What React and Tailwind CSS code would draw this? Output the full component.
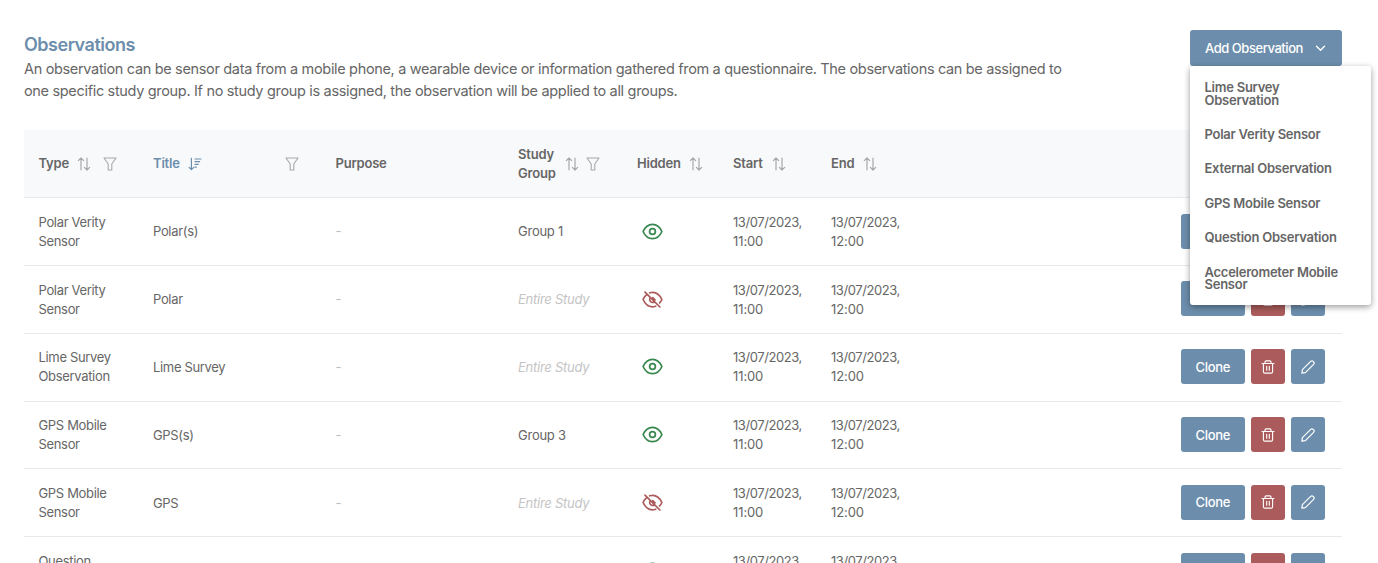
const line = { fill: 'none', stroke: 'currentColor', strokeLinecap: 'round', strokeLinejoin: 'round' };

function SortIcon() {
  return (
    <svg className="h-[14px] w-[14px] shrink-0 text-[#a6a8ab]" viewBox="0 0 14 14" {...line} strokeWidth="1.2">
      <path d="M4 12.8V1M1.3 3.7L4 1l2.7 2.7M10 1.2V13M7.4 10.4L10 13l2.7-2.6" />
    </svg>
  );
}

function SortDownIcon() {
  return (
    <svg className="h-[14px] w-[14px] shrink-0 text-[#6c8eac]" viewBox="0 0 14 14" {...line} strokeWidth="1.2">
      <path d="M3.4 1.300V12.600M1.100 10.300L3.400 12.600l2.300-2.300M7 2h6M7 4.700h4.600M7 7.400h3.200M7 10.100h1.400" />
    </svg>
  );
}

function FilterIcon() {
  return (
    <svg className="h-[14px] w-[14px] shrink-0 text-[#a6a8ab]" viewBox="0 0 14 14" {...line} strokeWidth="1.1">
      <path d="M1 1h12L8.8 7v6H5.2V7z" />
    </svg>
  );
}

function EyeIcon() {
  return (
    <svg className="h-[21px] w-[21px] text-[#37874e]" viewBox="0 0 21 21" {...line} strokeWidth="1.7">
      <path d="M1.1 10.5C3.2 5.7 6.400 3.300 10.500 3.300s7.300 2.400 9.400 7.200c-2.100 4.800-5.300 7.200-9.400 7.200s-7.300-2.400-9.400-7.200z" />
      <circle cx="10.5" cy="10.5" r="2.9" />
    </svg>
  );
}

function EyeSlashIcon() {
  return (
    <svg className="h-[21px] w-[21px] text-[#ab5b5b]" viewBox="0 0 21 21" {...line} strokeWidth="1.7">
      <path d="M3 3.1l14.9 14.9M7.600 3.800c5-1.400 9.500.7 12.300 6.700-.6 1.300-1.300 2.400-2.300 3.400M4.200 6.100C2.900 7.200 1.800 8.700 1.100 10.500c2.800 6.200 7.200 8.400 12.600 6.700M8.100 8.800c-1.200 2.500.5 5 3.800 4.500M10.800 8.600l2.200 2.200" />
    </svg>
  );
}

function TrashIcon() {
  return (
    <svg className="h-[14px] w-[14px]" viewBox="0 0 14 14" {...line} strokeWidth="1.1">
      <path d="M1 3.5h12M2.4 3.5v8.2c0 .8.6 1.4 1.4 1.4h6.4c.8 0 1.4-.6 1.4-1.4V3.5M4 3.3V2.1C4 1.4 4.5.9 5.200.9h3.600c.7 0 1.200.5 1.200 1.200v1.200M5.700 6.300v4M8.300 6.300v4" />
    </svg>
  );
}

function PencilIcon() {
  return (
    <svg className="h-[14px] w-[14px]" viewBox="0 0 14 14" {...line} strokeWidth="1.2">
      <path d="M.9 13.100l.5-3.500L9.700 1.400c.7-.7 1.800-.7 2.500 0l.4.400c.7.700.7 1.800 0 2.500L4.400 12.600z" />
    </svg>
  );
}

const columns = 'grid grid-cols-[114px_182.500px_182.500px_119px_96px_98px_minmax(0,1fr)_176px]';

const rows = [
  { type: ['Polar Verity', 'Sensor'], title: 'Polar(s)', group: 'Group 1', visible: true },
  { type: ['Polar Verity', 'Sensor'], title: 'Polar', group: null, visible: false },
  { type: ['Lime Survey', 'Observation'], title: 'Lime Survey', group: null, visible: true },
  { type: ['GPS Mobile', 'Sensor'], title: 'GPS(s)', group: 'Group 3', visible: true },
  { type: ['GPS Mobile', 'Sensor'], title: 'GPS', group: null, visible: false },
  { type: ['Question', 'Observation'], title: 'Question', group: null, visible: true },
];

const menu = [
  ['Lime Survey', 'Observation'],
  ['Polar Verity Sensor'],
  ['External Observation'],
  ['GPS Mobile Sensor'],
  ['Question Observation'],
  ['Accelerometer Mobile', 'Sensor'],
];

function Lines({ items }) {
  return items.map((item) => <span key={item} className="block whitespace-nowrap">{item}</span>);
}

function Row({ row }) {
  return (
    <div className={`${columns} h-[67.850px] items-center border-b border-[#e9e9ea] pt-[0.700px] text-[13px] leading-[19px] tracking-[-0.330px] [&>*]:pl-[15px] [&>*:first-child]:pl-[14.500px] [&>*:last-child]:pl-[14.500px]`}>
      <div><Lines items={row.type} /></div>
      <div>{row.title}</div>
      <div className="text-[#bdbdbd]">-</div>
      {row.group ? <div className="tracking-[-0.250px]">{row.group}</div> : <div className="text-[#c4c4c4] italic tracking-[-0.250px]">Entire Study</div>}
      <div><div className="-mt-px ml-[5px]">{row.visible ? <EyeIcon /> : <EyeSlashIcon />}</div></div>
      <div className="tracking-[-0.420px]"><Lines items={['13/07/2023,']} /><span className="tracking-[-0.100px]">11:00</span></div>
      <div className="tracking-[-0.420px]"><Lines items={['13/07/2023,']} /><span className="tracking-[-0.100px]">12:00</span></div>
      <div className="-mt-[1.500px] flex gap-[5.500px] text-white">
        <button className="h-[35px] w-[64.500px] rounded-[3px] bg-[#6c8eac] pt-px font-medium">Clone</button>
        <button className="flex h-[35px] w-[34.500px] items-center justify-center rounded-[3px] bg-[#ab5b5b]"><TrashIcon /></button>
        <button className="flex h-[35px] w-[34px] items-center justify-center rounded-[3px] bg-[#6c8eac]"><PencilIcon /></button>
      </div>
    </div>
  );
}

export default function App() {
  return (
    <main className="h-[563px] overflow-hidden bg-white pr-[36px] pl-[24px] font-['Inter',sans-serif] text-[#666]">
      <header className="flex h-[130px] items-start justify-between pt-[30px]">
        <div className="pt-[4px]">
          <h1 className="text-[18px] leading-[22px] font-semibold tracking-[-0.480px] text-[#6c8eac]">Observations</h1>
          <p className="mt-[2px] text-[14.500px] leading-[21.500px] tracking-[-0.335px] whitespace-nowrap">
            An observation can be sensor data from a mobile phone, a wearable device or information gathered from a questionnaire. The observations can be assigned to
            <br />
            <span className="tracking-[-0.325px]">one specific study group. If no study group is assigned, the observation will be applied to all groups.</span>
          </p>
        </div>
        <div className="relative w-[152px] shrink-0">
          <button className="flex h-[36px] w-full items-center justify-between rounded-[3px] bg-[#6c8eac] pt-px pr-[16px] pl-[15px] text-[13px] font-medium tracking-[-0.450px] whitespace-nowrap text-white">
            Add Observation
            <svg className="h-[11px] w-[11px]" viewBox="0 0 11 11" {...line} strokeWidth="1.400"><path d="M1.500 3.200l4 4 4-4" /></svg>
          </button>
          <ul className="absolute top-[36px] left-0 z-10 w-[181px] rounded-[3px] bg-white pt-[4px] pb-[3px] text-[13px] leading-[12.900px] font-semibold tracking-[-0.250px] shadow-[0_2px_6px_rgba(0,0,0,0.4)]">
            {menu.map((item) => (
              <li key={item[0]} className="px-[14.500px] py-[10.740px]"><Lines items={item} /></li>
            ))}
          </ul>
        </div>
      </header>
      <section>
        <div className={`${columns} h-[68px] items-center border-b border-[#e6e8ea] bg-[#f8f9fb] text-[13px] leading-[19px] font-semibold tracking-[-0.200px] [&>*]:pl-[15px] [&>*:first-child]:pl-[14.500px]`}>
          <div className="flex items-center"><span className="w-[38.500px]">Type</span><SortIcon /><span className="w-[11.500px]" /><FilterIcon /></div>
          <div className="flex items-center text-[#6c8eac]"><span className="w-[35px]">Title</span><SortDownIcon /><span className="w-[83px]" /><FilterIcon /></div>
          <div>Purpose</div>
          <div className="flex items-center"><span className="w-[47px]"><Lines items={['Study', 'Group']} /></span><SortIcon /><span className="w-[7px]" /><FilterIcon /></div>
          <div className="flex items-center"><span className="w-[52px]">Hidden</span><SortIcon /></div>
          <div className="flex items-center"><span className="w-[39px]">Start</span><SortIcon /></div>
          <div className="flex items-center"><span className="w-[32px]">End</span><SortIcon /></div>
          <div />
        </div>
        {rows.map((row, i) => <Row key={i} row={row} />)}
      </section>
    </main>
  );
}
